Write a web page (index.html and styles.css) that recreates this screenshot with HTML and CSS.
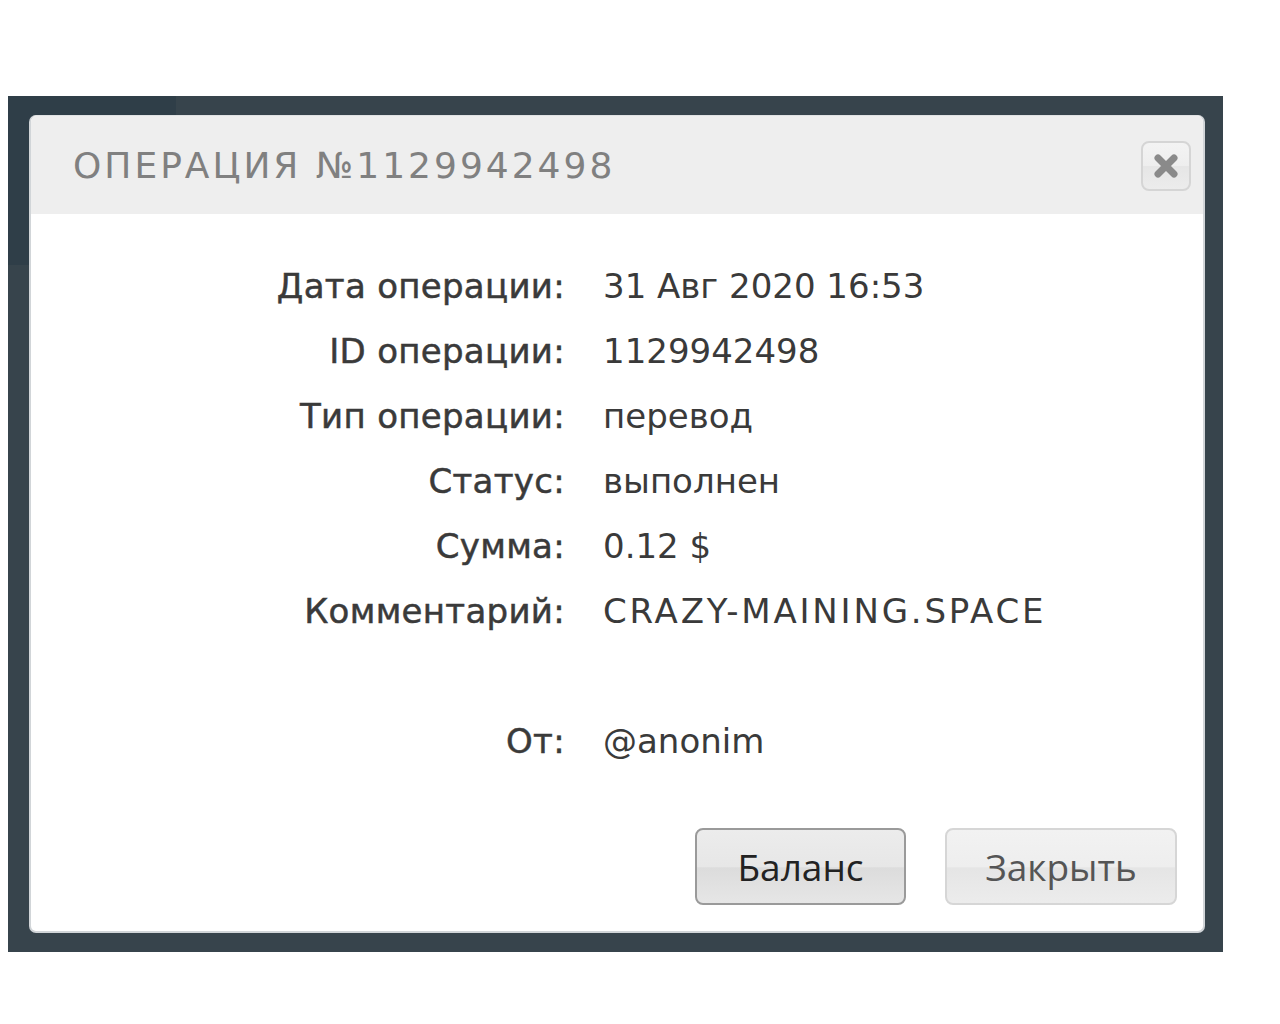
FILE: index.html
```html
<!DOCTYPE html>
<html lang="ru">
<head>
<meta charset="utf-8">
<title>Операция</title>
<link rel="stylesheet" href="styles.css">
</head>
<body>
<div class="backdrop">
  <div class="modal">
    <div class="modal-header">
      <h1 class="modal-title">ОПЕРАЦИЯ №1129942498</h1>
      <button class="close-btn" aria-label="Закрыть">
        <svg width="26" height="26" viewBox="0 0 26 26"><path d="M5 5 L21 21 M21 5 L5 21" stroke="#8a8a8a" stroke-width="7" stroke-linecap="round" fill="none"/></svg>
      </button>
    </div>
    <div class="modal-body">
      <dl class="details">
        <dt>Дата операции:</dt><dd>31 Авг 2020 16:53</dd>
        <dt>ID операции:</dt><dd>1129942498</dd>
        <dt>Тип операции:</dt><dd>перевод</dd>
        <dt>Статус:</dt><dd>выполнен</dd>
        <dt>Сумма:</dt><dd>0.12 $</dd>
        <dt>Комментарий:</dt><dd class="caps">CRAZY-MAINING.SPACE</dd>
        <dt class="spacer"></dt><dd class="spacer"></dd>
        <dt>От:</dt><dd>@anonim</dd>
      </dl>
      <div class="actions">
        <button class="btn btn-primary">Баланс</button>
        <button class="btn btn-light">Закрыть</button>
      </div>
    </div>
  </div>
</div>
</body>
</html>
```
FILE: styles.css
```css
html, body {
  margin: 0;
  padding: 0;
  background: #ffffff;
}

.backdrop {
  margin: 96px 0 0 8px;
  width: 1215px;
  height: 856px;
  box-sizing: border-box;
  padding: 19px 16px 0 21px;
  background:
    linear-gradient(#2f3e48, #2f3e48) 0 0 / 168px 169px no-repeat,
    #37444c;
}

.modal {
  width: 1176px;
  height: 818px;
  box-sizing: border-box;
  background: #ffffff;
  border-radius: 7px;
  border: 2px solid #d1d5d8;
  border-top: 1px solid #e0e2e3;
  overflow: hidden;
  display: flex;
  flex-direction: column;
}

.modal-header {
  height: 98px;
  flex: none;
  background: #eeeeee;
  display: flex;
  align-items: center;
  justify-content: space-between;
  padding: 0 12px 0 42px;
}

.modal-title {
  margin: 0;
  font-family: "DejaVu Sans", sans-serif;
  font-weight: normal;
  font-size: 36px;
  letter-spacing: 3px;
  color: #808080;
}

.close-btn {
  width: 50px;
  height: 50px;
  padding: 0;
  border: 2px solid #d5d5d5;
  border-radius: 8px;
  background: linear-gradient(#f3f3f3 0%, #eeeeee 50%, #e6e6e6 51%, #ececec 100%);
  display: flex;
  align-items: center;
  justify-content: center;
  margin-top: 2px;
}

.close-btn svg { display: block; filter: blur(0.5px); }

.modal-body {
  flex: 1;
  display: flex;
  flex-direction: column;
  padding: 39px 26px 26px 0;
}

.details {
  margin: 0;
  display: grid;
  grid-template-columns: 534px auto;
  column-gap: 38px;
  grid-auto-rows: 65px;
  align-items: center;
  font-family: "DejaVu Sans", sans-serif;
  font-size: 34px;
  color: #3a3a3a;
}

.details dt {
  text-align: right;
  letter-spacing: 0.3px;
  -webkit-text-stroke: 0.5px #3a3a3a;
}

.details dd {
  margin: 0;
}

.details .caps {
  letter-spacing: 2.8px;
}

.actions {
  margin-top: 55px;
  display: flex;
  justify-content: flex-end;
  gap: 39px;
}

.btn {
  height: 77px;
  box-sizing: border-box;
  border-radius: 8px;
  font-family: "Open Sans", sans-serif;
  font-size: 37px;
  padding: 0;
}

.btn-primary {
  width: 211px;
  color: #222222;
  border: 2px solid #9a9a9a;
  background: linear-gradient(#ececec 0%, #e7e7e7 50%, #dcdcdc 52%, #e6e6e6 100%);
}

.btn-light {
  width: 232px;
  color: #555555;
  border: 2px solid #d6d6d6;
  background: linear-gradient(#f2f2f2 0%, #eeeeee 50%, #e5e5e5 52%, #ececec 100%);
}
```
